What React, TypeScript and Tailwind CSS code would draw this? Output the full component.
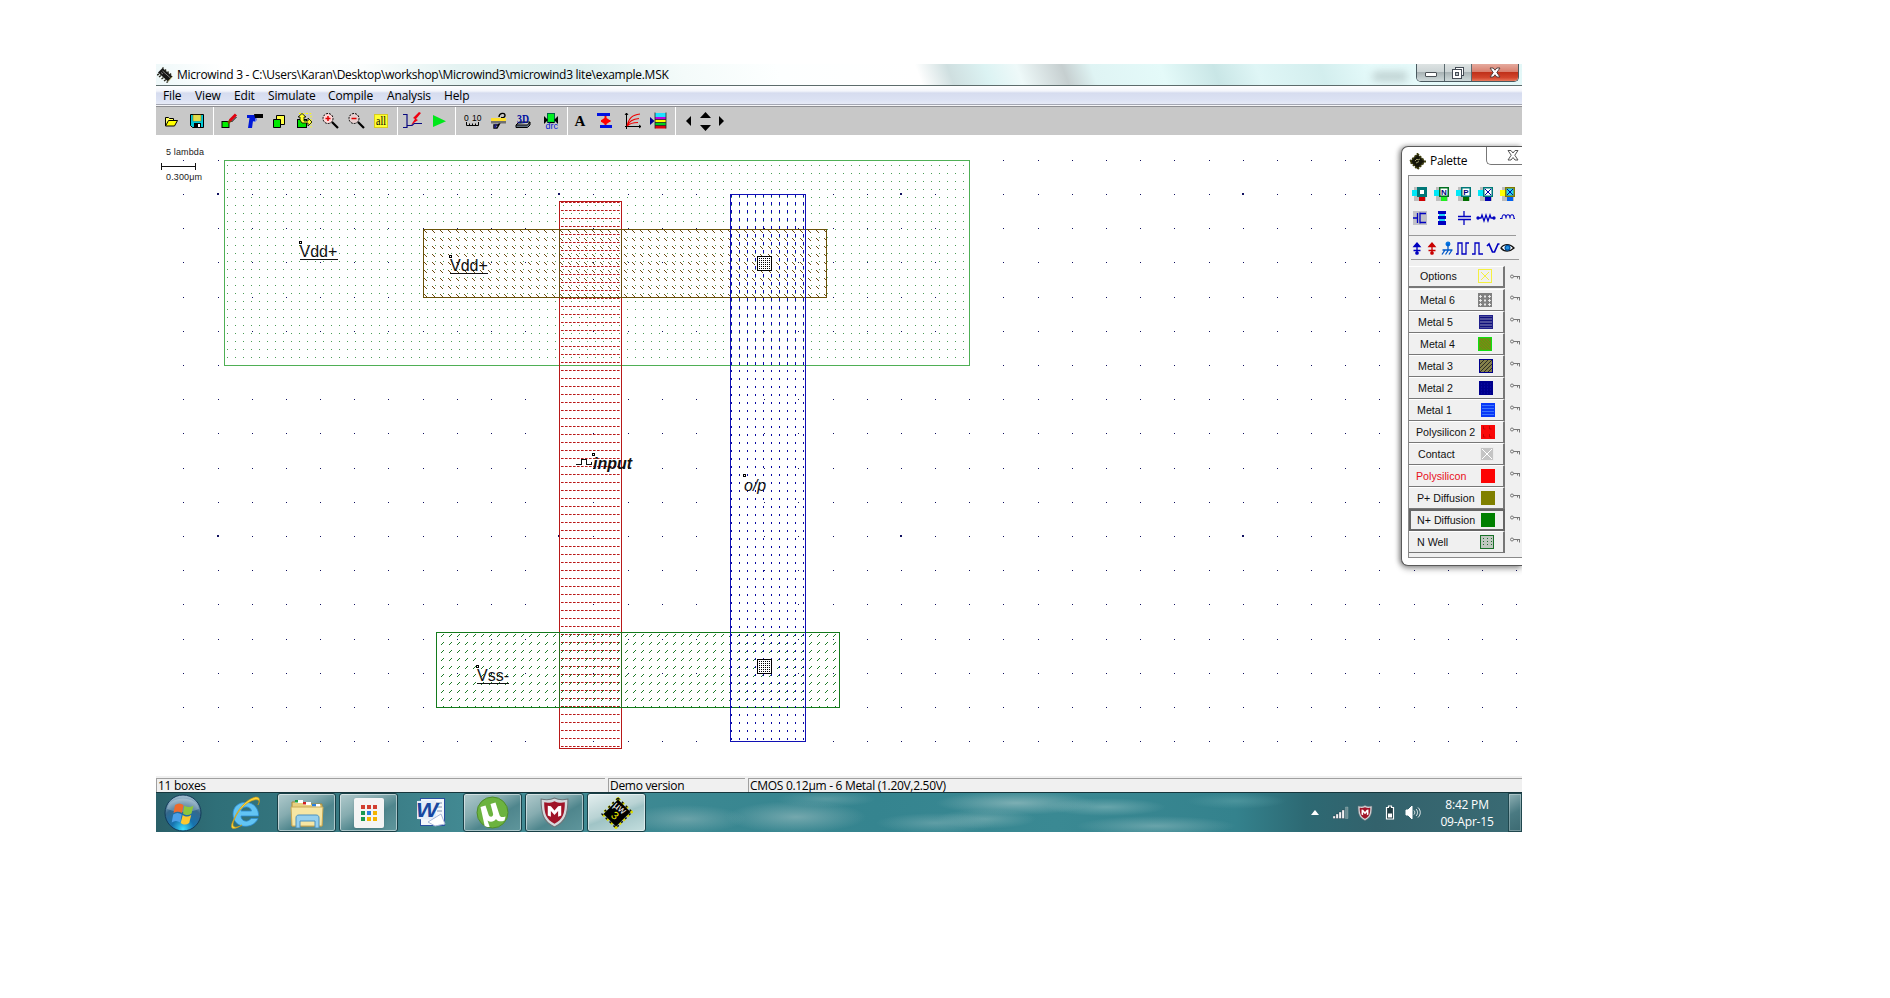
import React from "react";

const px = (n: number) => Math.round(n);

/* ---------- Title bar ---------- */

function ChipIcon({ className }: { className: string }) {
  return (
    <svg viewBox="0 0 16 16" className={className}>
      <path d="M1 5.500L5.500 1 15.500 9.500 11 14.500z" fill="#161616" />
      <path d="M0 8l2-1M2 10l2-1.500M4.500 12l2-1.500M7 14l2-1.500M9.500 15.500l1.500-1M6.500 .5l-1 1M9 2.500L8 4M11.500 4.500l-1 1.500M14 6.500l-1 1.500" stroke="#2c2c20" strokeWidth="1.400" />
      <path d="M5.500 4l8 7M4 5.500l2 1.500" stroke="#8a8a8a" strokeWidth=".9" />
      <path d="M11 14.500l4.500-5" stroke="#b0a850" strokeWidth=".8" />
    </svg>
  );
}

function TitleBar() {
  return (
    <div className="flex h-[22px] items-start overflow-hidden border-b border-[#5c6b6b] bg-[linear-gradient(70deg,#eef8f9_0px,#fff_70px,#fbfdfd_200px,#e4f3f2_290px,#dff1f0_400px,#f4fbfa_500px,#fdffff_590px,#fff_720px,#cfdfe0_750px,#dcf3f3_785px,#eef9f9_815px,#c6cfd0_858px,#dff4f4_885px,#e4faf9_950px,#c9e6e6_1000px,#dff6f6_1040px,#d3eeee_1100px,#e6fbfb_1150px,#e3f7f7_1290px)] pl-px">
      <ChipIcon className="mt-[3px] h-4 w-4 shrink-0" />
      <span className="ml-[4px] mt-[1px] w-[1196px] shrink-0 whitespace-nowrap text-[12px] leading-[20px] text-black tracking-[-0.27px]">
        Microwind 3 - C:\Users\Karan\Desktop\workshop\Microwind3\microwind3 lite\example.MSK
      </span>
      <div className="mt-[8px] h-[9px] w-[34px] bg-[#9fb0b0] opacity-60 blur-[4px]" />
      <div className="ml-auto mr-[3px] flex h-[18px] shrink-0 rounded-b-[5px] border border-t-0 border-[#4a5a60] bg-white">
        <div className="flex w-[28px] items-center justify-center rounded-bl-[4px] border-r border-[#5c6b70] bg-[linear-gradient(#dde3e3,#cdd5d6_45%,#a9b3b5_50%,#cfdadb)]">
          <div className="mt-[3px] h-[5px] w-[12px] rounded-[1px] border border-[#4a5055] bg-white" />
        </div>
        <div className="flex w-[27px] items-center justify-center border-r border-[#5c6b70] bg-[linear-gradient(#dde3e3,#cdd5d6_45%,#a9b3b5_50%,#cfdadb)]">
          <svg className="h-[12px] w-[12px]" viewBox="0 0 12 12">
            <rect x="3.500" y="0.500" width="8" height="8" fill="#fff" stroke="#444b55" />
            <rect x="0.500" y="2.500" width="9" height="9" fill="#fff" stroke="#444b55" />
            <rect x="3.500" y="5.500" width="3" height="3" fill="#b9c2c6" stroke="#444b55" />
          </svg>
        </div>
        <div className="flex w-[46px] items-center justify-center rounded-br-[4px] bg-[linear-gradient(#e5aa9e,#d9806f_45%,#c0311a_50%,#d2452c_80%,#e8795c)]">
          <svg className="h-[11px] w-[12px]" viewBox="0 0 12 11">
            <path d="M1 1h3.200L6 3.200 7.800 1H11L7.800 5.500 11 10H7.800L6 7.800 4.200 10H1L4.200 5.500Z" fill="#fff" stroke="#54403f" />
          </svg>
        </div>
      </div>
    </div>
  );
}

function MenuBar() {
  return (
    <div className="flex h-[20px] bg-[linear-gradient(#fff_0,#f3f5fb_5px,#d6dcef_7px,#dce2f3_14px,#e6eaf6_18px,#a5a8b4_18px,#a5a8b4_19px,#f6f6f8_19px)] pl-[7px] text-[12px] leading-[20px] text-black tracking-[-0.15px]">
      <span className="w-[32px]">File</span>
      <span className="w-[39px]">View</span>
      <span className="w-[34px]">Edit</span>
      <span className="w-[60px]">Simulate</span>
      <span className="w-[59px]">Compile</span>
      <span className="w-[57px]">Analysis</span>
      <span>Help</span>
    </div>
  );
}

/* ---------- Toolbar ---------- */

function Slot({ w, children }: { w: string; children: React.ReactNode }) {
  return <div className={`flex shrink-0 items-center justify-center ${w}`}>{children}</div>;
}

function Ico({ children }: { children: React.ReactNode }) {
  return (
    <svg className="h-[18px] w-[18px] shrink-0 overflow-visible" viewBox="0 0 18 18" fill="none">
      {children}
    </svg>
  );
}

function Sep() {
  return (
    <div className="flex w-[6px] shrink-0 justify-center self-stretch">
      <div className="w-px bg-white" />
    </div>
  );
}

function Toolbar() {
  return (
    <div className="flex h-[29px] items-center border-t border-[#8e8e92] bg-[#c8c8c8] pl-[2px]">
      <Slot w="w-[26px]">
        <Ico>
          <path d="M3.500 14V5.500h3l1 1h4v2" fill="#ffff60" stroke="#000" />
          <path d="M3.500 14l3-5.500h9l-3 5.500z" fill="#ffff00" stroke="#000" />
        </Ico>
      </Slot>
      <Slot w="w-[26px]">
        <Ico>
          <path d="M2.500 2.500h13v13h-11l-2-2z" fill="#00c8d8" stroke="#000" />
          <rect x="5" y="3" width="8" height="6" fill="#ffff60" stroke="#806000" strokeWidth=".5" />
          <path d="M5 5h8M5 7h8" stroke="#a09020" strokeWidth=".6" />
          <rect x="6" y="11" width="7" height="4" fill="#000" />
          <rect x="10" y="12" width="2" height="3" fill="#fff" />
        </Ico>
      </Slot>
      <Sep />
      <Slot w="w-[26px]">
        <Ico>
          <rect x="2" y="9.500" width="7" height="6" fill="#00f000" stroke="#000" />
          <path d="M8 11l3-3" stroke="#804000" strokeWidth="2.500" />
          <path d="M10 8.500l6-6" stroke="#e00010" strokeWidth="3" />
          <path d="M11.500 10l5-5" stroke="#000" />
        </Ico>
      </Slot>
      <Slot w="w-[26px]">
        <Ico>
          <path d="M1 3h9v2l-1 4H7L6 16H2L3.500 6H1z" fill="#0018d8" />
          <path d="M8 2h9v4H9z" fill="#000" />
          <path d="M7.500 9.500c3 0 3-2 3-3" stroke="#3058ff" />
        </Ico>
      </Slot>
      <Slot w="w-[22px]">
        <Ico>
          <path d="M6.500 3.500h8v9h-8z" fill="#ffff40" stroke="#000" />
          <path d="M3.500 7.500h7v8h-7z" fill="#00e800" stroke="#000" />
        </Ico>
      </Slot>
      <Slot w="w-[28px]">
        <Ico>
          <path d="M4 1.500h12v14" stroke="#ffff00" strokeDasharray="2 1.500" />
          <rect x="2.500" y="7.500" width="9" height="8" fill="#00e000" stroke="#000" />
          <path d="M5 8V5H3l4-3.500L11 5H9v4h4V6l4 4-4 4v-3H7z" fill="#ffff30" stroke="#000" strokeWidth=".8" />
        </Ico>
      </Slot>
      <Slot w="w-[24px]">
        <Ico>
          <path d="M11 10l6 6" stroke="#000" strokeWidth="2.200" />
          <circle cx="7" cy="6.500" r="5" fill="#ffd8d8" stroke="#000" strokeDasharray="2 1" />
          <path d="M4.500 6.500h5M7 4v5" stroke="#e00000" strokeWidth="1.500" />
        </Ico>
      </Slot>
      <Slot w="w-[28px]">
        <Ico>
          <path d="M11 10l6 6" stroke="#000" strokeWidth="2.200" />
          <circle cx="7" cy="6.500" r="5" fill="#e8d0d0" stroke="#000" strokeDasharray="2 1" />
          <path d="M4.500 6.500h5" stroke="#e00000" strokeWidth="1.500" />
        </Ico>
      </Slot>
      <Slot w="w-[22px]">
        <svg className="h-[14px] w-[14px]" viewBox="0 0 14 14">
          <rect x=".5" y=".5" width="13" height="13" fill="#ffff30" stroke="#d8cc20" />
          <text x="2" y="11" fontSize="12" textLength="10" lengthAdjust="spacingAndGlyphs" fontFamily="Liberation Serif, serif">all</text>
        </svg>
      </Slot>
      <div className="w-[2px]" />
      <Sep />
      <Slot w="w-[26px]">
        <Ico>
          <path d="M-1 2.500h4v13h-4M3 13.500h5l2-2h8" stroke="#0a0a80" strokeWidth="1.200" />
          <path d="M15 0L9 6l2 1-4 6 7-5-2-1 5-6z" fill="#f00010" />
        </Ico>
      </Slot>
      <Slot w="w-[26px]">
        <Ico>
          <path d="M3 3l13 6.200L3 15z" fill="#00e81a" />
        </Ico>
      </Slot>
      <Sep />
      <Slot w="w-[30px]">
        <svg className="h-[18px] w-[18px] overflow-visible" viewBox="0 0 18 18">
          <text x="0" y="9" fontSize="8.500" fontFamily="Liberation Sans, sans-serif">0</text>
          <text x="8" y="9" fontSize="8.500" fontFamily="Liberation Sans, sans-serif">10</text>
          <path d="M2.500 10v3.500h12V10M5.500 11.500v2M8.500 11.500v2M11.500 11.500v2" fill="none" stroke="#000" />
        </svg>
      </Slot>
      <Slot w="w-[22px]">
        <Ico>
          <path d="M9 5c0-4 6-5 6-1.500 0 2-2 2.500-4 2M4 13h4l2-2-3 5-3 0z" stroke="#000" strokeWidth="1.400" />
          <path d="M6 12l-1 4" stroke="#202080" strokeWidth="2" />
          <path d="M1 6h15v3H1z" fill="#ffe030" />
          <path d="M1 9h15v2.500H1z" fill="#707070" />
        </Ico>
      </Slot>
      <Slot w="w-[26px]">
        <svg className="h-[18px] w-[18px] overflow-visible" viewBox="0 0 18 18">
          <path d="M2 13l3-3h11l-2.500 3zM2 13v2.500h11.500l2.500-2.500v-3" fill="#607080" stroke="#000" />
          <text x="3" y="10.500" fontSize="13" fontWeight="bold" fill="#0010a0" textLength="12" lengthAdjust="spacingAndGlyphs" fontFamily="Liberation Serif, serif">3D</text>
        </svg>
      </Slot>
      <Slot w="w-[28px]">
        <svg className="h-[18px] w-[18px] overflow-visible" viewBox="0 0 18 18">
          <rect x="6.500" y="1.500" width="7" height="9" fill="#00f020" stroke="#064" />
          <path d="M3 4l4 4-4 4zM17 4l-4 4 4 4z" fill="#000" />
          <path d="M7 10.500h6" stroke="#000" strokeWidth="1.200" />
          <text x="4.500" y="17" fontSize="9" fill="#0018d0" fontFamily="Liberation Sans, sans-serif">drc</text>
        </svg>
      </Slot>
      <Sep />
      <Slot w="w-[20px]">
        <span className="font-['Liberation_Serif',serif] text-[15px] font-bold leading-[18px]">A</span>
      </Slot>
      <Slot w="w-[30px]">
        <Ico>
          <path d="M1 1h13v3H1zM4 13h12v3H4z" fill="#0010e0" />
          <path d="M8.500 4h2v2l3 2h1v2h-1l-3 2v1h-2v-1l-3-2H5V8h.5l3-2z" fill="#f00" />
        </Ico>
      </Slot>
      <Slot w="w-[26px]">
        <Ico>
          <path d="M2.500 1v16M1 14.500h16M1 3l1.500-2L4 3M15 13l2 1.500-2 1.500" stroke="#000" />
          <path d="M3 14C5 6 8 3 16 2M3 14c2-5 6-7 12-7.500M3 14c3-3 6-3.500 11-3.500" stroke="#f00000" strokeWidth="1.100" />
        </Ico>
      </Slot>
      <Slot w="w-[26px]">
        <Ico>
          <path d="M0 5l4.500 4L0 13z" fill="#000090" />
          <path d="M5 1h11v4H5z" fill="#20e0ff" />
          <path d="M5 5h11v3H5z" fill="#c000e0" />
          <path d="M5 7.500h11v3H5z" fill="#ffff00" />
          <path d="M5 10.500h11v3H5z" fill="#00d020" />
          <path d="M5 13.500h11v3H5z" fill="#e00010" />
          <path d="M5 .5v16M16 .5v16M5 10.500h11M5 13.500h11M5 7.500h11" stroke="#222" strokeWidth=".8" />
        </Ico>
      </Slot>
      <Sep />
      <Slot w="w-[20px]">
        <svg className="h-[10px] w-[5px]" viewBox="0 0 5 10"><path d="M5 0v10L0 5z" /></svg>
      </Slot>
      <Slot w="w-[14px]">
        <svg className="h-[19px] w-[11px]" viewBox="0 0 11 19"><path d="M5.500 0L11 6H0zM5.500 19L0 13h11z" /></svg>
      </Slot>
      <Slot w="w-[18px]">
        <svg className="h-[10px] w-[5px]" viewBox="0 0 5 10"><path d="M0 0v10l5-5z" /></svg>
      </Slot>
    </div>
  );
}

/* ---------- Layout canvas ---------- */

const gridCols = Array.from({ length: 40 }, (_, k) => px(183.4 + 34.17 * k)).filter((x) => x < 1520);
const gridRows = Array.from({ length: 18 }, (_, j) => px(159.8 + 34.2 * j));

function Marker({ x, y }: { x: number; y: number }) {
  return <rect x={x + 0.5} y={y + 0.5} width="2" height="2" fill="#fff" stroke="#000" />;
}

function ContactBox({ x, y }: { x: number; y: number }) {
  return (
    <g>
      <rect x={x + 0.5} y={y + 0.5} width="14" height="14" fill="#fff" stroke="#000" />
      {[2, 4, 6, 8, 10, 12].map((d) => (
        <line key={d} x1={x + 2} x2={x + 13} y1={y + d + 0.5} y2={y + d + 0.5} stroke="#000" strokeDasharray="1 1" />
      ))}
    </g>
  );
}

function LayoutCanvas() {
  return (
    <svg className="block h-[641px] w-[1366px] bg-white" viewBox="156 135 1366 641" fontFamily="Liberation Sans, sans-serif" shapeRendering="crispEdges">
      <defs>
        <pattern id="well" x="227" y="165" width="8" height="8" patternUnits="userSpaceOnUse">
          <rect width="1" height="1" fill="#4a9d55" />
        </pattern>
        <pattern id="poly" x="561" y="202" width="4" height="8" patternUnits="userSpaceOnUse">
          <rect width="2" height="1" fill="#b81818" />
          <rect x="2" width="1" height="1" fill="#d87070" />
        </pattern>
        <pattern id="pdiff" x="424" y="230" width="8" height="8" patternUnits="userSpaceOnUse">
          <path d="M0 0h1v1h-1zM1 1h1v1h-1zM2 2h1v1h-1z" fill="#6b4a10" />
        </pattern>
        <pattern id="ndiff" x="441" y="634" width="8" height="8" patternUnits="userSpaceOnUse">
          <path d="M0 2h1v1h-1zM1 1h1v1h-1zM2 0h1v1h-1z" fill="#1c7a28" />
        </pattern>
        <pattern id="metal" x="731" y="202" width="8" height="8" patternUnits="userSpaceOnUse">
          <rect width="1" height="2" fill="#0808a0" />
        </pattern>
        <pattern id="metalWell" x="731" y="202" width="8" height="8" patternUnits="userSpaceOnUse">
          <rect width="1" height="3" fill="#0808b0" />
        </pattern>
      </defs>
      <rect x="225" y="161" width="744" height="204" fill="url(#well)" />
      <g fill="#101060">
        {gridRows.map((y, j) =>
          gridCols.map((x, i) => <rect key={`${i}-${j}`} x={x} y={y} width="1" height="1" />),
        )}
        {[1, 11].map((j) =>
          [1, 11, 21, 31].map((i) => <path key={`${i}-${j}`} d={`M${gridCols[i] - 1} ${gridRows[j] - 1}h2v1h-1v1h-1z`} />),
        )}
      </g>
      <rect x="224.500" y="160.500" width="745" height="205" fill="none" stroke="#4faf55" />
      <rect x="560" y="202" width="61" height="546" fill="url(#poly)" />
      <rect x="559.500" y="201.500" width="62" height="547" fill="none" stroke="#b81818" />
      <rect x="424" y="230" width="402" height="67" fill="url(#pdiff)" />
      <rect x="423.500" y="229.500" width="403" height="68" fill="none" stroke="#6b5208" />
      <path d="M559.500 229v68M621.500 229v68" stroke="#6b4a10" />
      <rect x="437" y="633" width="402" height="74" fill="url(#ndiff)" />
      <rect x="436.500" y="632.500" width="403" height="75" fill="none" stroke="#147a1c" />
      <path d="M559.500 632v75M621.500 632v75" stroke="#2a6a1c" />
      <rect x="731" y="195" width="74" height="171" fill="url(#metalWell)" />
      <rect x="731" y="366" width="74" height="375" fill="url(#metal)" />
      <rect x="730.500" y="194.500" width="75" height="547" fill="none" stroke="#1010b4" />
      <ContactBox x={757} y={256} />
      <ContactBox x={757} y={659} />

      <g fontSize="16" fill="#111" shapeRendering="auto">
        <text x="299.500" y="257">Vdd+</text>
        <text x="450" y="271">Vdd+</text>
        <text x="477" y="681">Vss-</text>
        <text x="593" y="469" fontWeight="bold" fontStyle="italic">input</text>
        <text x="744" y="491" fontStyle="italic">o/p</text>
      </g>
      <path d="M300 259.500h38M450 273.500h38M477 683.500h32" stroke="#111" />
      <Marker x={299} y={241} />
      <Marker x={449} y={255} />
      <Marker x={476} y={665} />
      <Marker x={592} y={453} />
      <Marker x={743} y={474} />
      <path d="M576 464.500h5.500v-5h5v5h5v-3" fill="none" stroke="#111" />

      <g fontSize="9" fill="#222" shapeRendering="auto">
        <text x="166" y="155" textLength="38">5 lambda</text>
        <text x="166" y="180" textLength="36">0.300μm</text>
      </g>
      <path d="M161.500 163v7M195.500 163v7M161 166.500h35" stroke="#111" strokeWidth="1" />
    </svg>
  );
}

/* ---------- Palette ---------- */

function Device({ fg, tag, tail, left }: { fg: string; tag: string; tail: string; left: string }) {
  return (
    <svg className="h-[16px] w-[16px]" viewBox="0 0 16 16">
      <rect x="2" y="1" width="12" height="14" fill="#bdbdbd" />
      <rect x="0" y="4" width="6" height="6" fill={left} />
      <rect x="7" y="11" width="6" height="4" fill={tail} />
      <rect x="5" y="1" width="10" height="10" fill={fg} />
      {tag === "" && <rect x="8" y="4" width="4" height="4" fill="#fff" />}
      {tag !== "" && <rect x="6.500" y="2.500" width="7" height="7" fill={tag === "Y" ? "#20d8f0" : "#fff"} />}
      {(tag === "X" || tag === "Y") && <path d="M7 3l6 6M13 3l-6 6" stroke="#0000a0" />}
      {(tag === "N" || tag === "P") && (
        <text x="10" y="9" fontSize="8" textAnchor="middle" fontWeight="bold" fill="#000080" fontFamily="Liberation Sans, sans-serif">{tag}</text>
      )}
    </svg>
  );
}

function P({ children, narrow }: { children: React.ReactNode; narrow?: boolean }) {
  return (
    <svg
      className={narrow ? "h-[15px] w-[15px] shrink-0 overflow-visible" : "h-[16px] w-[16px] shrink-0 overflow-visible"}
      viewBox={narrow ? "0 0 15 15" : "0 0 16 16"}
      fill="none"
      stroke="#0000c0"
      strokeWidth="1.300"
    >
      {children}
    </svg>
  );
}

function KeyIcon() {
  return (
    <svg className="h-[6px] w-[11px] shrink-0" viewBox="0 0 11 6" fill="none" stroke="#777">
      <circle cx="2" cy="2.500" r="1.500" />
      <path d="M3.500 2.500h6.500M7.500 2.500v2M9.500 2.500v3" />
    </svg>
  );
}

type Swatch = { fill: string; border?: string; extra?: React.ReactNode };

const layers: { name: string; pad: string; sx: string; sw: Swatch; red?: boolean; active?: boolean }[] = [
  {
    name: "Metal 6", pad: "pl-[11px]", sx: "mr-[11px]",
    sw: { fill: "#808080", extra: <path d="M1 3.500h3M6 3.500h2M10 3.500h3M1 7.500h3M6 7.500h2M10 7.500h3M1 11.500h3M6 11.500h2M10 11.500h3M2.500 2v3M7 2v3M11.500 2v3M2.500 6v3M7 6v3M11.500 6v3M2.500 10v3M7 10v3M11.500 10v3" stroke="#eee" strokeWidth=".9" /> },
  },
  { name: "Metal 5", pad: "pl-[9px]", sx: "mr-[10px]", sw: { fill: "#50509c", border: "#20208c", extra: <path d="M0 2.500h14M0 5.500h14M0 8.500h14M0 11.500h14" stroke="#10107c" /> } },
  { name: "Metal 4", pad: "pl-[11px]", sx: "mr-[11px]", sw: { fill: "#5f9c10", border: "#10e010", extra: <path d="M2 2l10 10M5 2l7 7M8 2l4 4M2 5l7 7M2 8l4 4" stroke="#8a7a18" /> } },
  { name: "Metal 3", pad: "pl-[9px]", sx: "mr-[10px]", sw: { fill: "#85804a", border: "#00008c", extra: <path d="M1 5l4-4M1 9l8-8M1 13L13 1M5 13l8-8M9 13l4-4" stroke="#222" strokeWidth=".9" /> } },
  { name: "Metal 2", pad: "pl-[9px]", sx: "mr-[10px]", sw: { fill: "#00008c", extra: <path d="M2 3h10M2 6h10M2 9h10M2 12h10" stroke="#1010b0" strokeDasharray="1 2" /> } },
  { name: "Metal 1", pad: "pl-[8px]", sx: "mr-[8px]", sw: { fill: "#0838f8", extra: <path d="M1.500 2.500h12M1.500 5.500h12M1.500 8.500h12M1.500 11.500h12" stroke="#70b0ff" strokeDasharray="1 1" /> } },
  { name: "Polysilicon 2", pad: "pl-[7px]", sx: "mr-[8px]", sw: { fill: "#fa0808", extra: <path d="M2.500 1v3h2M8.500 1v3h2M2.500 9v3h2M8.500 9v3h2" stroke="#b80000" strokeWidth=".8" /> } },
  { name: "Contact", pad: "pl-[9px]", sx: "mr-[9px]", sw: { fill: "#c4c4c4", border: "#ececec", extra: <path d="M2 2l10 10M12 2L2 12" stroke="#fff" /> } },
  { name: "Polysilicon", pad: "pl-[7px]", sx: "mr-[8px]", sw: { fill: "#fd0404" }, red: true },
  { name: "P+ Diffusion", pad: "pl-[8px]", sx: "mr-[8px]", sw: { fill: "#808000" } },
  { name: "N+ Diffusion", pad: "pl-[6px]", sx: "mr-[8px]", sw: { fill: "#008000" }, active: true },
  { name: "N Well", pad: "pl-[8px]", sx: "mr-[9px]", sw: { fill: "#c0c8c0", border: "#187028", extra: <path d="M3 3.500h9M3 6.500h9M3 9.500h9" stroke="#207030" strokeDasharray="1 3" /> } },
];

function SwatchBox({ s }: { s: Swatch }) {
  return (
    <svg className="h-[14px] w-[14px] shrink-0" viewBox="0 0 14 14" fill="none">
      <rect width="14" height="14" fill={s.fill} />
      {s.extra}
      {s.border && <rect x=".5" y=".5" width="13" height="13" stroke={s.border} />}
    </svg>
  );
}

function Palette() {
  return (
    <div className="absolute left-[1245px] top-[11px] h-[420px] w-[121px] overflow-hidden rounded-l-[7px] border border-r-0 border-[#5a5a5a] bg-white shadow-[-2px_0_5px_rgba(0,0,0,.35),0_3px_6px_rgba(0,0,0,.3)]">
      <div className="flex h-[28px] items-start">
        <svg className="ml-[7px] mt-[6px] h-[17px] w-[17px]" viewBox="0 0 17 17">
          <path d="M8.500 1L16 8.500 8.500 16 1 8.500z" fill="#15150a" stroke="#3c3c0c" strokeWidth="2" strokeDasharray="2 1.200" />
          <path d="M8.500 3L14 8.500 8.500 14 3 8.500z" fill="#15150a" />
          <path d="M6 8l2-2 1 1 2-1M7 10l3-1.500" stroke="#9c9c6c" fill="none" />
        </svg>
        <span className="ml-[4px] mt-[4px] w-[56px] text-[12px] leading-[20px] tracking-[-0.25px] text-black">Palette</span>
        <div className="flex h-[18px] flex-1 items-center justify-end rounded-bl-[5px] border-b border-l border-[#777] pr-[3px]">
          <svg className="h-[11px] w-[12px]" viewBox="0 0 12 11">
            <path d="M1 .5h3L6 3 8 .5h3L7.800 5.200 11 10H8L6 7.500 4 10H1l3.200-4.800z" fill="#fff" stroke="#555" />
          </svg>
        </div>
      </div>
      <div className="ml-[6px] h-[383px] border border-r-0 border-[#8a8a8a] bg-[#f0f0f0]">
        <div className="flex flex-col gap-[9px] pl-[3px] pt-[10px]">
          <div className="flex gap-[6px]">
            <Device fg="#007878" tag="" tail="#d00000" left="#00e8f8" />
            <Device fg="#007020" tag="N" tail="#20f020" left="#00e8f8" />
            <Device fg="#007878" tag="P" tail="#007000" left="#00e8f8" />
            <Device fg="#007878" tag="X" tail="#0000b0" left="#00e8f8" />
            <Device fg="#807800" tag="Y" tail="#0060f0" left="#ffff00" />
          </div>
          <div className="flex gap-[6px]">
            <P>
              <rect x="1" y="0" width="14" height="14" fill="#c0c0c8" stroke="none" />
              <path d="M1 7h4M5.500 2v10M8 1.500v11M14 2.500H8M14 11.500H8" />
            </P>
            <P>
              <rect x="4" y="0" width="8" height="3" fill="#0000c0" stroke="none" />
              <rect x="4" y="5" width="8" height="3" fill="#0000c0" stroke="none" />
              <rect x="4" y="10" width="8" height="4" fill="#0000c0" stroke="none" />
              <path d="M5 4h6M5 9h6" stroke="#20d8f8" strokeWidth="2" />
            </P>
            <P>
              <path d="M8 0v5.500M2 5.500h13M2 8.500h13M8 8.500V14" />
            </P>
            <P>
              <path d="M0 7h3l1-3 2 6 2-6 2 6 2-6 1 3h3" />
              <circle cx="0" cy="7" r="1" fill="#0000c0" />
              <circle cx="16" cy="7" r="1" fill="#0000c0" />
            </P>
            <P>
              <path d="M0 7.500h2c0-5 4-5 4 0 0-5 4-5 4 0 0-5 4-5 4 0h1" strokeWidth="1.100" />
            </P>
          </div>
        </div>
        <div className="mt-[8px] h-px w-[107px] bg-[#999]" />
        <div className="flex h-[23px] items-center pl-[1px] pt-[2px]">
          <P narrow>
            <path d="M7 2v10M4 5.500L7 2l3 3.500zM3.500 9.500h7" fill="#0000c0" />
            <circle cx="7" cy="12" r="1.200" fill="#0000c0" />
          </P>
          <P narrow>
            <path d="M7 2v10M4 5.500L7 2l3 3.500zM3.500 9.500h7" fill="#c80000" stroke="#c80000" />
            <circle cx="7" cy="12" r="1.200" fill="#c80000" stroke="#c80000" />
          </P>
          <P narrow>
            <circle cx="8" cy="3" r="1.800" fill="#0070e0" stroke="#0070e0" />
            <path d="M8 3v6M2.500 9h10M5 9l-3 4.500M8.500 9l-3 4.500M12 9l-3 4.500" stroke="#0058c8" />
          </P>
          <P narrow>
            <path d="M1 13h2V2h4v11h4V2h3" />
          </P>
          <P narrow>
            <path d="M2 13h3V2h4v11h4" />
          </P>
          <P narrow>
            <path d="M2 5l2-2 3.500 8h2L13 3h1.500" strokeWidth="1.700" />
          </P>
          <P narrow>
            <path d="M1 7C4 2.500 10 2.500 14 7 10 11 4 11 1 7z" stroke="#111" fill="#fff" />
            <circle cx="7.500" cy="6.800" r="2.400" fill="#2090e0" stroke="#0050a0" />
          </P>
        </div>
        <div className="ml-[2px] h-px w-[108px] bg-[#999]" />
        <div className="mt-[5px] font-['Liberation_Sans',sans-serif] text-[10.67px] text-[#111]">
          <div className="mb-px flex h-[23px] items-center">
            <div className="flex h-[22px] w-[96px] items-center justify-between border-b-2 border-r-2 border-t border-b-[#777] border-r-[#777] border-t-white pl-[11px]">
              <span>Options</span>
              <svg className="mr-[11px] h-[14px] w-[14px]" viewBox="0 0 14 14" fill="none" stroke="#f4f040">
                <rect x=".5" y=".5" width="13" height="13" />
                <path d="M3 3l8 8M11 3l-8 8" />
              </svg>
            </div>
            <div className="ml-[5px]"><KeyIcon /></div>
          </div>
          {layers.map((l) => (
            <div key={l.name} className="flex h-[22px] items-center">
              <div className={`flex h-[22px] w-[96px] shrink-0 items-center justify-between ${l.active ? "border-2 border-[#666]" : "border-b border-r-2 border-t border-b-[#777] border-r-[#777] border-t-white"} ${l.pad}`}>
                <span className={`whitespace-nowrap ${l.red ? "text-[#e81020]" : ""}`}>{l.name}</span>
                <div className={`-ml-4 ${l.sx}`}><SwatchBox s={l.sw} /></div>
              </div>
              <div className="mb-[4px] ml-[5px]"><KeyIcon /></div>
            </div>
          ))}
        </div>
      </div>
    </div>
  );
}

/* ---------- Status bar ---------- */

function StatusBar() {
  return (
    <div className="flex h-[16px] gap-[3px] bg-[#f0f0f0] pt-[2px] text-[12px] leading-[13px] text-black">
      <div className="w-[449px] border-l border-t border-[#a0a0a0] pl-px tracking-[-0.3px]">11 boxes</div>
      <div className="w-[137px] border-l border-t border-[#a0a0a0] pl-px tracking-[-0.3px]">Demo version</div>
      <div className="flex-1 border-l border-t border-[#a0a0a0] pl-px tracking-[-0.3px]">CMOS 0.12µm - 6 Metal (1.20V,2.50V)</div>
    </div>
  );
}

/* ---------- Taskbar ---------- */

function TaskButton({ children, active }: { children: React.ReactNode; active?: boolean }) {
  return (
    <div
      className={`flex h-[39px] w-[59px] shrink-0 items-center justify-center rounded-[3px] border border-[#173f46] shadow-[inset_0_0_0_1px_rgba(255,255,255,.5)] ${
        active
          ? "bg-[linear-gradient(160deg,#e4efef,#b9d3d4_45%,#a0c4c6_55%,#c4dede)]"
          : "bg-[linear-gradient(150deg,#b0cacc,#86acb0_35%,#4f868d_60%,#5f969c)]"
      }`}
    >
      {children}
    </div>
  );
}

function Shield({ className }: { className: string }) {
  return (
    <svg className={className} viewBox="0 0 28 30">
      <path d="M14 1c4 2 8 2 13 1 0 14-2 22-13 27C3 24 1 16 1 2c5 1 9 1 13-1z" fill="#d5d9dc" stroke="#6d7478" />
      <path d="M14 4c3 1.500 6 1.800 10 1.200 0 11-2 16.800-10 20.800C6 22 4 16.200 4 5.200 8 5.800 11 5.500 14 4z" fill="#a01428" />
      <path d="M7.500 18V8.500l3 .5 3.500 4 3.500-4 3-.5V18l-3 1v-5.500L14 17.500l-3.500-4V19z" fill="#fff" />
    </svg>
  );
}

function Taskbar() {
  return (
    <div className="flex h-[40px] items-start border-t border-[#16363c] bg-[radial-gradient(60px_14px_at_530px_26px,#8ab4b899,transparent),radial-gradient(70px_16px_at_640px_24px,#8ab4b8bb,transparent),radial-gradient(50px_8px_at_670px_6px,#7fb0b577,transparent),radial-gradient(60px_10px_at_780px_30px,#84b3b888,transparent),radial-gradient(80px_12px_at_860px_10px,#9ec2c4aa,transparent),radial-gradient(50px_10px_at_830px_26px,#8ab8ba88,transparent),radial-gradient(60px_9px_at_950px_14px,#7fb4b8aa,transparent),radial-gradient(80px_10px_at_1000px_33px,#8ab8bc99,transparent),radial-gradient(50px_8px_at_1080px_8px,#5fa2a888,transparent),linear-gradient(90deg,#2a5f68_0,#2f6f78_60px,#3a7c85_220px,#438b94_320px,#3a8791_560px,#35848f_720px,#3a8993_900px,#34828d_1080px,#2d6973_1150px,#33626c_1220px,#3a6b74_1366px)]">
      <div className="flex h-[39px] w-[121px] items-center">
        <svg className="ml-[8px] h-[38px] w-[38px]" viewBox="0 0 38 38">
          <defs>
            <radialGradient id="orb" cx=".5" cy=".95" r=".9">
              <stop offset="0" stopColor="#3ce0ff" />
              <stop offset=".35" stopColor="#1672ae" />
              <stop offset=".7" stopColor="#35688c" />
              <stop offset="1" stopColor="#9ab8cc" />
            </radialGradient>
          </defs>
          <circle cx="19" cy="19" r="18" fill="url(#orb)" stroke="#123a58" />
          <path d="M3 15C5 1 33 1 35 15c-9 4-22 4-32 0z" fill="#fff" opacity=".25" />
          <path d="M11 11c3-2 5.500-2 8.500 0l-1.500 8c-3-2-5.500-2-8.500 0z" fill="#ee6a2c" />
          <path d="M20.500 11.500c3 2 5.500 2 9 0l-2 8c-3 2-5.500 2-8.500 0z" fill="#8cc63c" />
          <path d="M9.200 20.500c3-2 5.500-2 8.500 0l-1.500 8c-3-2-5.500-2-8.500 0z" fill="#4ca0e8" />
          <path d="M18.700 21c3 2 5.500 2 8.500 0l-2 8c-3 2-5.500 2-8.500 0z" fill="#fcc830" />
        </svg>
        <svg className="ml-[26px] h-[34px] w-[34px]" viewBox="0 0 34 34">
          <path d="M30.500 20H13c0 5.500 7 7 10 2.500h7C25 34 5 33 5 18 5 3 29 2 30.500 18zM13 15h10.500c-1-5.500-9.500-5.500-10.500 0z" fill="#62c4f4" stroke="#2c8cd0" strokeWidth=".8" />
          <path d="M6 23C-1 36 8 33 14 29 7 33 2 32 7 22 12 11 24 2 30 4c2 1 1 3 0 5 3-6 1-9-4-7.500C18 4 10 13 6 23z" fill="#ffd83a" stroke="#c89a18" strokeWidth=".7" />
        </svg>
      </div>
      <TaskButton>
        <svg className="h-[30px] w-[34px]" viewBox="0 0 34 30">
          <path d="M2 4h10l2 2h18v22H2z" fill="#e8d080" stroke="#a88a38" />
          <path d="M5 2h8v3H5z" fill="#fff" /><path d="M5 2h3v2.500H5z" fill="#20a040" />
          <path d="M13 4h8v3h-8z" fill="#fff" /><path d="M13 4h3v2.500h-3z" fill="#d02020" />
          <path d="M22 6h8v3h-8z" fill="#fff" /><path d="M22 6h4v2.500h-4z" fill="#2880e0" />
          <path d="M1 9h32l-1 19H2z" fill="#f6e6a4" stroke="#c8aa58" />
          <path d="M6 30V20c0-2 1-3 3-3h17c2 0 3 1 3 3v10h-4v-7H10v7z" fill="#96d0ee" stroke="#4a90c0" />
        </svg>
      </TaskButton>
      <div className="w-[3px]" />
      <TaskButton>
        <div className="grid h-[30px] w-[30px] grid-cols-3 content-center justify-center gap-[2px] rounded-[2px] bg-[#f4f4f4] px-[7px] shadow">
          <i className="h-[4px] w-[4px] bg-[#d23f31]" /><i className="h-[4px] w-[4px] bg-[#d23f31]" /><i className="h-[4px] w-[4px] bg-[#d23f31]" />
          <i className="h-[4px] w-[4px] bg-[#1a9850]" /><i className="h-[4px] w-[4px] bg-[#2a7de0]" /><i className="h-[4px] w-[4px] bg-[#f4b400]" />
          <i className="h-[4px] w-[4px] bg-[#1a9850]" /><i className="h-[4px] w-[4px] bg-[#f4b400]" /><i className="h-[4px] w-[4px] bg-[#f4b400]" />
        </div>
      </TaskButton>
      <div className="flex h-[39px] w-[65px] items-center justify-center">
        <svg className="mb-px h-[31px] w-[30px]" viewBox="0 0 30 31">
          <rect x="4.500" y="1.500" width="24" height="27" fill="#f4f7fb" stroke="#2850a0" />
          <path d="M20 6h6M21 10h5M21 14h5" stroke="#8090b0" />
          <path d="M1 4l19-1v20L1 22z" fill="#e4ecf8" />
          <text x="0" y="20" fontSize="21" fontWeight="bold" fontStyle="italic" fill="#1747a0" fontFamily="Liberation Sans, sans-serif" textLength="22" lengthAdjust="spacingAndGlyphs">W</text>
          <path d="M12 25l13-8 4 10-10 2z" fill="#fff" stroke="#a8b8d8" />
        </svg>
      </div>
      <TaskButton>
        <svg className="h-[33px] w-[33px]" viewBox="0 0 33 33">
          <circle cx="16.500" cy="16.500" r="15.500" fill="#6cb33f" stroke="#4f8c2c" />
          <path d="M4.500 11l5-1.500 3 9c1 3.500 5.500 2.500 4.500-1L14.500 8l5-1.500 4 12.500c.8 2.200 2.500 2.500 6 1.500l-1 4c-4 1.500-7 1-8.500-1.500-2 3-6 3.500-8.500 1.500l2.200 6.500c-2 .2-4-.5-5-1z" fill="#fff" />
        </svg>
      </TaskButton>
      <div className="w-[3px]" />
      <TaskButton>
        <Shield className="h-[31px] w-[29px]" />
      </TaskButton>
      <div className="w-[3px]" />
      <TaskButton active>
        <svg className="h-[32px] w-[32px]" viewBox="0 0 32 32">
          <path d="M17 2L30 15 15 30 2 17z" fill="none" stroke="#d8d800" strokeWidth="3.500" strokeDasharray="2.500 3" />
          <path d="M17 1L31 15 15 31 1 17z" fill="none" stroke="#111" strokeWidth="1.500" strokeDasharray="2 3.500" />
          <path d="M17 2.500L29.500 15 15 29.500 2.500 17z" fill="#000" />
          <g transform="rotate(40 16 16)" fontFamily="Liberation Sans, sans-serif">
            <text x="15" y="13.500" fontSize="10" textAnchor="middle" fill="#fff">µw</text>
            <text x="16" y="23" fontSize="11" textAnchor="middle" fill="#e8e800">3</text>
          </g>
        </svg>
      </TaskButton>
      <div className="ml-auto flex h-[39px] items-center">
        <svg className="h-[5px] w-[8px]" viewBox="0 0 8 5"><path d="M4 0l4 5H0z" fill="#fff" /></svg>
        <svg className="ml-[14px] h-[13px] w-[16px]" viewBox="0 0 16 13" fill="#fff" stroke="#223" strokeWidth=".3">
          <path d="M0 10h2.300v2.500H0zM3 8h2.300v4.500H3zM6 6h2.300v6.500H6zM9 4h2.300v8.500H9z" />
          <path d="M12.500 1h2.500v11.500h-2.500z" fill="#6b8d92" stroke="#bcc" />
        </svg>
        <Shield className="ml-[8px] h-[16px] w-[16px]" />
        <svg className="ml-[12px] h-[15px] w-[10px]" viewBox="0 0 10 15">
          <path d="M3.500 1h3v1.500h2V14h-7V2.500h2z" fill="#223c42" stroke="#fff" strokeWidth="1.200" />
          <path d="M3 8.500h4v4H3z" fill="#fff" />
        </svg>
        <svg className="ml-[10px] h-[15px] w-[16px]" viewBox="0 0 16 15" fill="none" stroke="#fff">
          <path d="M1 5h2l4-4v13l-4-4H1z" fill="#fff" />
          <path d="M9 5.500c1 1 1 3 0 4M11 4c2 2 2 5 0 7M13 2.500c3 3 3 7 0 10" strokeWidth=".9" />
        </svg>
        <div className="ml-[16px] w-[60px] whitespace-nowrap text-center text-[12px] leading-[17px] text-white tracking-[-0.2px]">
          <div>8:42 PM</div>
          <div>09-Apr-15</div>
        </div>
        <div className="ml-[11px] h-[39px] w-[14px] border border-[#1f474e] bg-[linear-gradient(150deg,#8fb0b4,#4a7a82_50%,#3c6a72)] shadow-[inset_0_0_0_1px_rgba(255,255,255,.3)]" />
      </div>
    </div>
  );
}

export default function App() {
  return (
    <div className="h-[998px] w-[1890px] overflow-hidden bg-white pl-[156px] pt-[64px] font-['Open_Sans','Noto_Sans',sans-serif]">
      <div className="flex w-[1366px] flex-col">
        <TitleBar />
        <MenuBar />
        <Toolbar />
        <div className="relative h-[641px] overflow-hidden">
          <LayoutCanvas />
          <Palette />
        </div>
        <StatusBar />
        <Taskbar />
      </div>
    </div>
  );
}
